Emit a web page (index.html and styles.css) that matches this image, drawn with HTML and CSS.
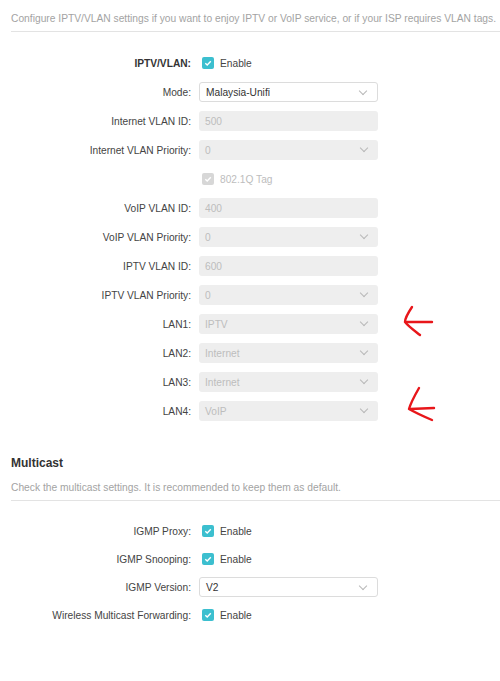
FILE: index.html
```html
<!DOCTYPE html>
<html>
<head>
<meta charset="utf-8">
<link rel="stylesheet" href="styles.css">
</head>
<body>
<div class="page">
  <p class="desc first">Configure IPTV/VLAN settings if you want to enjoy IPTV or VoIP service, or if your ISP requires VLAN tags.</p>
  <div class="form vlan">
    <div class="row"><span class="label strong">IPTV/VLAN:</span><span class="check"><span class="box"><svg viewBox="0 0 12 12"><path d="M3.3 6.2 L5.2 8 L8.8 4.2" fill="none" stroke="#fff" stroke-width="1.4"/></svg></span>Enable</span></div>
    <div class="row"><span class="label">Mode:</span><span class="select">Malaysia-Unifi<i class="chev"></i></span></div>
    <div class="row"><span class="label">Internet VLAN ID:</span><span class="input off">500</span></div>
    <div class="row"><span class="label">Internet VLAN Priority:</span><span class="input off">0<i class="chev"></i></span></div>
    <div class="row"><span class="label"></span><span class="check off"><span class="box"><svg viewBox="0 0 12 12"><path d="M3.3 6.2 L5.2 8 L8.8 4.2" fill="none" stroke="#fff" stroke-width="1.4"/></svg></span>802.1Q Tag</span></div>
    <div class="row"><span class="label">VoIP VLAN ID:</span><span class="input off">400</span></div>
    <div class="row"><span class="label">VoIP VLAN Priority:</span><span class="input off">0<i class="chev"></i></span></div>
    <div class="row"><span class="label">IPTV VLAN ID:</span><span class="input off">600</span></div>
    <div class="row"><span class="label">IPTV VLAN Priority:</span><span class="input off">0<i class="chev"></i></span></div>
    <div class="row"><span class="label">LAN1:</span><span class="input off">IPTV<i class="chev"></i></span></div>
    <div class="row"><span class="label">LAN2:</span><span class="input off">Internet<i class="chev"></i></span></div>
    <div class="row"><span class="label">LAN3:</span><span class="input off">Internet<i class="chev"></i></span></div>
    <div class="row"><span class="label">LAN4:</span><span class="input off">VoIP<i class="chev"></i></span></div>
  </div>
  <h2 class="title">Multicast</h2>
  <p class="desc">Check the multicast settings. It is recommended to keep them as default.</p>
  <div class="form mc">
    <div class="row"><span class="label">IGMP Proxy:</span><span class="check"><span class="box"><svg viewBox="0 0 12 12"><path d="M3.3 6.2 L5.2 8 L8.8 4.2" fill="none" stroke="#fff" stroke-width="1.4"/></svg></span>Enable</span></div>
    <div class="row"><span class="label">IGMP Snooping:</span><span class="check"><span class="box"><svg viewBox="0 0 12 12"><path d="M3.3 6.2 L5.2 8 L8.8 4.2" fill="none" stroke="#fff" stroke-width="1.4"/></svg></span>Enable</span></div>
    <div class="row"><span class="label">IGMP Version:</span><span class="select">V2<i class="chev"></i></span></div>
    <div class="row"><span class="label">Wireless Multicast Forwarding:</span><span class="check"><span class="box"><svg viewBox="0 0 12 12"><path d="M3.3 6.2 L5.2 8 L8.8 4.2" fill="none" stroke="#fff" stroke-width="1.4"/></svg></span>Enable</span></div>
  </div>
  <svg class="mark" viewBox="0 0 500 681" width="500" height="681">
    <path d="M412 307 C408 313 405 318 405 322 C409 327 415 331 420 335" fill="none" stroke="#e8161a" stroke-width="2.4" stroke-linecap="round" stroke-linejoin="round"/>
    <path d="M406 322 L432 322" fill="none" stroke="#e8161a" stroke-width="2.4" stroke-linecap="round"/>
    <path d="M419 388 C415 395 411 402 409 409 C416 413 425 417 432 420" fill="none" stroke="#e8161a" stroke-width="2.4" stroke-linecap="round" stroke-linejoin="round"/>
    <path d="M410 409 L434 408" fill="none" stroke="#e8161a" stroke-width="2.4" stroke-linecap="round"/>
  </svg>
</div>
</body>
</html>
```
FILE: styles.css
```css
* { box-sizing: border-box; }
html, body { margin: 0; padding: 0; background: #fff; }
body {
  font-family: "Liberation Sans", Arial, sans-serif;
  font-size: 10.2px;
  color: #333;
  width: 500px;
  height: 681px;
  overflow: hidden;
}
.page { position: relative; padding-left: 11px; height: 681px; }
.desc {
  margin: 0;
  color: #a3a3a3;
  font-size: 10.25px;
  line-height: 13px;
  white-space: nowrap;
  border-bottom: 1px solid #e3e3e3;
  padding-bottom: 6px;
}
.desc.first { padding-top: 12px; }
.form { display: flex; flex-direction: column; }
.vlan { margin-top: 21px; gap: 9px; }
.mc { margin-top: 20px; gap: 8px; }
.row { display: flex; align-items: center; height: 20px; }
.label {
  width: 188px;
  text-align: right;
  padding-right: 8px;
  color: #444;
  flex: none;
}
.label.strong { font-weight: bold; color: #333; }
.check { display: flex; align-items: center; margin-left: 3px; color: #444; }
.check.off { color: #bdbdbd; }
.box {
  width: 12px; height: 12px; border-radius: 2px;
  background: #3cbfcf; margin-right: 6px; display: flex;
}
.box svg { width: 12px; height: 12px; }
.check.off .box { background: #d7d7d7; }
.select, .input {
  position: relative;
  width: 179px;
  height: 20px;
  border-radius: 3px;
  display: flex;
  align-items: center;
  padding-left: 6px;
}
.select { border: 1px solid #dcdcdc; background: #fff; color: #333; }
.input.off { background: #eeeeee; color: #bdbdbd; }
.chev {
  position: absolute;
  right: 11px;
  top: 5px;
  width: 6px; height: 6px;
  border-right: 1px solid #b8b8b8;
  border-bottom: 1px solid #b8b8b8;
  transform: rotate(45deg);
}
.title {
  margin: 34px 0 0;
  font-size: 12px;
  font-weight: bold;
  color: #333;
  line-height: 16px;
}
.title + .desc { margin-top: 10px; }
.mark { position: absolute; left: 0; top: 0; pointer-events: none; }
```
